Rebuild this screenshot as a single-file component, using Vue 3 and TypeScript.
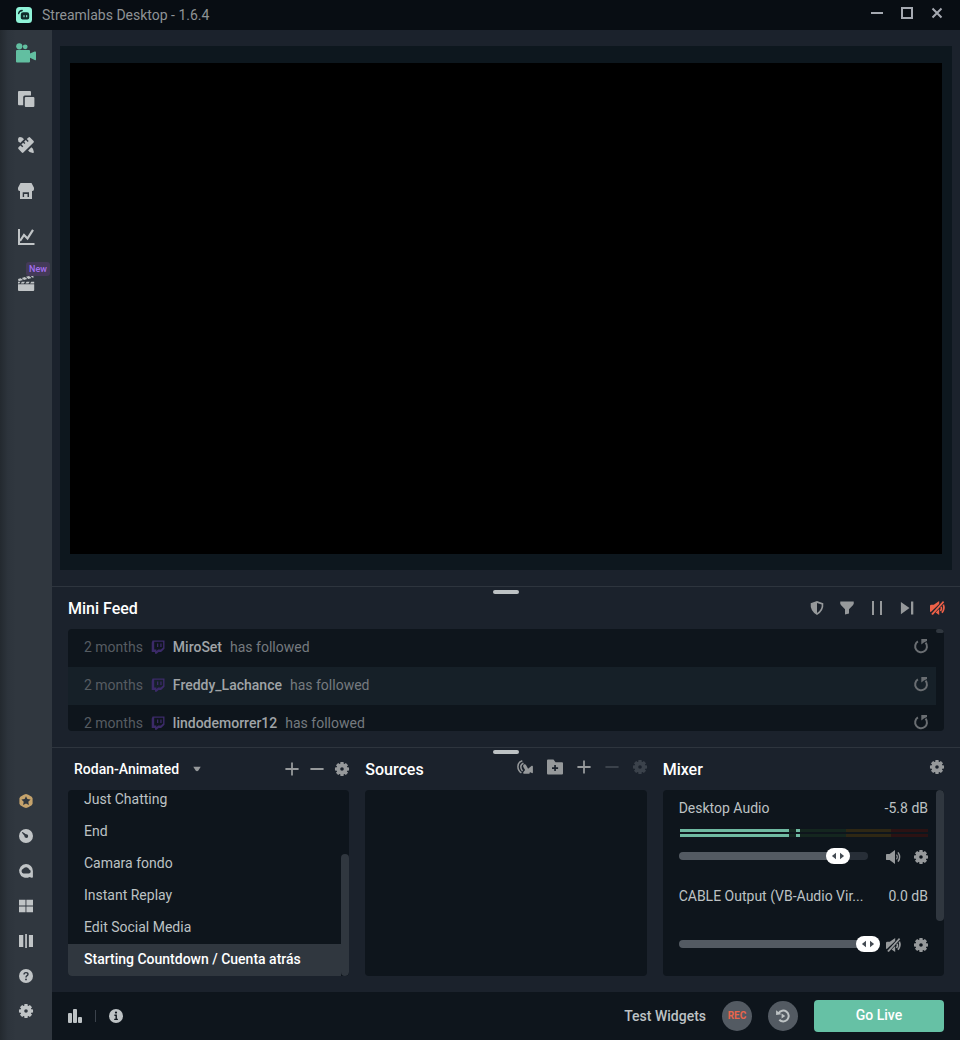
<script setup lang="ts">
import { h, ref, type FunctionalComponent } from 'vue'

function gearPath(c: number, outer: number, inner: number, hole: number): string {
  const points: string[] = []
  const step = Math.PI / 4
  for (let i = 0; i < 8; i++) {
    const a = i * step
    const corners: [number, number][] = [
      [inner, a - 0.32],
      [outer, a - 0.22],
      [outer, a + 0.22],
      [inner, a + 0.32],
    ]
    for (const [r, t] of corners) {
      points.push(`${(c + r * Math.cos(t)).toFixed(2)} ${(c + r * Math.sin(t)).toFixed(2)}`)
    }
  }
  return `M${points.join('L')}ZM${c - hole} ${c}a${hole} ${hole} 0 1 0 ${hole * 2} 0a${hole} ${hole} 0 1 0 ${-hole * 2} 0Z`
}

interface Glyph {
  w: number
  h: number
  body: string
}

const glyphs: Record<string, Glyph> = {
  logo: {
    w: 16,
    h: 16,
    body: '<rect width="16" height="16" rx="3.500" fill="#8ff3d8"/><path d="M2.600 6.600C3 4.600 4.300 3.600 6.200 3.500" fill="none" stroke="#0f2a2a" stroke-width="1.300" stroke-linecap="round"/><path d="M7.200 5.200h3.800a2.200 2.200 0 0 1 2.200 2.200v3.400a1.800 1.800 0 0 1-1.800 1.800H6.600a1.800 1.800 0 0 1-1.800-1.800V7.600a2.400 2.400 0 0 1 2.400-2.400z" fill="#0f2a2a"/><path d="M8 8.500v1.300M10.700 8.500v1.300" stroke="#8ff3d8" stroke-width="1.100" stroke-linecap="round"/>',
  },
  minimize: { w: 12, h: 12, body: '<path d="M0 6h12" stroke="currentColor" stroke-width="2"/>' },
  maximize: { w: 12, h: 12, body: '<path d="M1 1h10v10H1z" fill="none" stroke="currentColor" stroke-width="2"/>' },
  close: { w: 12, h: 12, body: '<path d="M1.500 1.500l9 9M10.500 1.500l-9 9" fill="none" stroke="currentColor" stroke-width="2"/>' },
  camera: {
    w: 20,
    h: 20,
    body: '<circle cx="3.300" cy="3.300" r="3.100"/><circle cx="9.200" cy="3.800" r="2.400"/><path d="M1 7h12a1 1 0 0 1 1 1v2.600L18.600 8.600q1.400-.5 1.400.8v7q0 1.200-1.300.6L14 14.800v3.700a1 1 0 0 1-1 1H1a1 1 0 0 1-1-1V8a1 1 0 0 1 1-1z"/>',
  },
  layers: {
    w: 16,
    h: 16,
    body: '<path d="M1 0h11a1 1 0 0 1 1 1v3.600H6.800A1.600 1.600 0 0 0 5.200 6.200v8H1a1 1 0 0 1-1-1V1a1 1 0 0 1 1-1z"/><rect x="6.800" y="6" width="9.600" height="10" rx="1"/>',
  },
  tools: {
    w: 16,
    h: 16,
    body: '<path d="M0 2.500Q0 .6 1.800.1L4.200.4 6 2.200 2.200 6 .4 4.200z"/><path d="M13.400 10.200l1.500 1.500 1 3.200q0 1.200-1.100 1.100l-3.200-.9-1.500-1.500z"/><path d="M.5 10.300L2.400 8.400l1.900 1.900 1-1-1.900-1.900 1.700-1.700 1.300 1.300 1-1-1.300-1.300 1.700-1.700 1.900 1.900 1-1-1.900-1.900L10.500.4q.8-.7 1.600 0l3.500 3.500q.7.8 0 1.600L5.400 15.600q-.8.700-1.600 0L.5 12q-.8-.8 0-1.700z"/>',
  },
  store: {
    w: 16,
    h: 16,
    body: '<path d="M2.500 0h11L16 4.700v1.600q0 1.600-1.500 1.600h-13Q0 7.900 0 6.300V4.700z"/><path fill-rule="evenodd" d="M2 7.500h12v8.500H2zM4.700 9.200v4.900h1.400v-3h3.400v3H11V9.200z"/>',
  },
  chart: {
    w: 16,
    h: 16,
    body: '<path d="M1 0v15h15.500" fill="none" stroke="currentColor" stroke-width="2"/><path d="M2 12L6 6l3.500 3.600L15 .9" fill="none" stroke="currentColor" stroke-width="2.200"/>',
  },
  clapper: {
    w: 16,
    h: 16,
    body: '<path d="M0 3.900L2.600 3.200l2.500 1.900L.6 6.300zM3.800 2.900l3-.8 2.500 2-3.300.9zM8 1.800l3-.8 2.500 2-3.200.9zM12.200.6L15 0l.7 2.500-1 .2z"/><path d="M0 6.800h2.500L1.300 8.600H0zM3.900 6.800H7L5.800 8.600H2.700zM8.600 6.800h3.100l-1.200 1.800H7.400zM13.300 6.800h2.900v1.800h-4.100zM0 9.200h16.200v5.800a1 1 0 0 1-1 1H1a1 1 0 0 1-1-1z"/>',
  },
  prime: {
    w: 14,
    h: 14,
    body: '<path fill-rule="evenodd" d="M7 0l2.300.7 3.400 2 .9 1.600v5.400l-.9 1.600-3.400 2L7 14l-2.300-.7-3.400-2-.9-1.600V4.300l.9-1.600 3.400-2zM7 2.200L5.600 5.100l-3.200.4 2.300 2.200-.6 3.200L7 9.400l2.900 1.500-.6-3.200 2.300-2.200-3.200-.4z"/>',
  },
  gauge: {
    w: 14,
    h: 14,
    body: '<path fill-rule="evenodd" d="M7 0a7 7 0 1 1 0 14A7 7 0 0 1 7 0zM2.800 3.600l2.600 3.200a1.900 1.900 0 1 0 1.500-1.600L3.600 2.900z"/>',
  },
  chat: {
    w: 14,
    h: 14,
    body: '<path fill-rule="evenodd" d="M7 0a6.900 6.900 0 0 1 6.900 6.900v5.900q0 1.300-1.200 1l-2.200-.9A6.900 6.900 0 1 1 7 0zM4.500 9.600h5.300a2.100 2.100 0 0 0 .4-4.100A3.300 3.300 0 0 0 4.200 4.800 2.500 2.500 0 0 0 4.500 9.600z"/>',
  },
  grid: { w: 14, h: 14, body: '<path d="M0 .7h6.500v5.900H0zM7.400.7H14v5.900H7.400zM0 7.400h6.500v5.900H0zM7.400 7.400H14v5.900H7.400z"/>' },
  bars: { w: 14, h: 14, body: '<path d="M0 1h4.300v12H0zM6.200 0h1.700v14H6.200zM9.900 1H14v12H9.900z"/>' },
  help: {
    w: 14,
    h: 14,
    body: '<circle cx="7" cy="7" r="7"/><path d="M5 5.500Q5 3.600 7 3.600t2 1.700Q9 6.200 7.800 6.900 7 7.400 7 8.400" fill="none" stroke="#2f363f" stroke-width="1.400"/><circle cx="7" cy="10.400" r=".9" fill="#2f363f"/>',
  },
  gear: { w: 14, h: 14, body: `<path fill-rule="evenodd" d="${gearPath(7, 7.2, 5.5, 1.8)}"/>` },
  shield: {
    w: 14,
    h: 14,
    body: '<path fill-rule="evenodd" d="M7 0l6.300 2.200q.8 7.600-6.300 11.800Q-.1 9.800.7 2.200zM7 2v9.900q5-3.300 4.700-8.400z"/>',
  },
  filter: { w: 14, h: 14, body: '<path d="M.3.600h13.400q.5 2.200-.6 3.500L9 8.200v4.200L5 13.600V8.200L.9 4.100Q-.2 2.800.3.600z"/>' },
  pause: { w: 14, h: 14, body: '<path d="M2 0h2v14H2zM10 0h2v14h-2z"/>' },
  next: { w: 14, h: 14, body: '<path d="M.9.900l8.600 6.100L.9 13.200zM11 .5h2.300v13H11z"/>' },
  muted: {
    w: 14,
    h: 14,
    body: '<path d="M0 5q0-1.200 1.300-1.200h2.500L9.200.1V3L.6 11.200 0 10.300z"/><path d="M13 .1L14.200 1.200 2.800 13.900 1.200 13z"/><path d="M9.200 8.100v5.800L5.600 11.500z"/><path d="M11.200 5.700q.9 2.300-.7 4.400M13.300 3.600q1.700 4.100-1.300 8.200" fill="none" stroke="currentColor" stroke-width="1.700"/>',
  },
  speaker: {
    w: 14,
    h: 14,
    body: '<path d="M0 4.800q0-.9.900-.9h2.700L9 .1v13.800L3.600 10.100H.9q-.9 0-.9-.9z"/><path d="M10.500 4.600q1.700 2.400 0 4.800" fill="none" stroke="currentColor" stroke-width="1.100"/><path d="M12 2.300q3.200 4.700 0 9.400" fill="none" stroke="currentColor" stroke-width="1.500"/>',
  },
  twitch: {
    w: 14,
    h: 14,
    body: '<path fill-rule="evenodd" d="M1.500.5h12v8.200l-3.400 3.200H7.600l-2 1.900H4v-1.900H.7V2.700zM3.200 1.700v7.900h2.200v1.700L7 9.600h2.800l2.300-2.200V1.700zM6 3.600h1.300v3.300H6zM9.300 3.600h1.300v3.300H9.300z"/>',
  },
  replay: {
    w: 14,
    h: 14,
    body: '<path d="M3.900 2.400A5.900 5.900 0 1 0 11.600 3.600" fill="none" stroke="currentColor" stroke-width="2"/><path d="M7.300-.1h5.700V2L9.900 3.500 7.300 5.400z"/>',
  },
  plus: { w: 14, h: 14, body: '<path d="M7 .4v13.200M.4 7h13.200" fill="none" stroke="currentColor" stroke-width="1.800"/>' },
  minus: { w: 14, h: 14, body: '<path d="M.4 7h13.200" fill="none" stroke="currentColor" stroke-width="2"/>' },
  caret: { w: 8, h: 8, body: '<path d="M.3 1.700h7.400L5.400 5.400Q4 7 2.600 5.400z"/>' },
  broadcast: {
    w: 16,
    h: 14,
    body: '<path d="M5.300.7Q.9 2.200.9 6.500q0 4.200 3.500 6.400M6.500 3.300Q3.800 4.300 3.800 6.800q0 2.400 1.700 4.200" fill="none" stroke="currentColor" stroke-width="1.500"/><path d="M7 4.300q1.500-.4 2.300 1.200l1.800 3.200 3.600-2.900q1.100-.4 1.200.6v6.200q-.2.900-1.100.5l-2-1v.8q-.1.800-.9.800H6.700Q5.600 13.300 6.500 12l1.600-2-1.900-3.200Q5.800 5 7 4.300z"/>',
  },
  folder: {
    w: 16,
    h: 16,
    body: '<path fill-rule="evenodd" d="M1 .5h5.500l2 2.700h6.500a1 1 0 0 1 1 1v10.300a1 1 0 0 1-1 1H1a1 1 0 0 1-1-1V1.500a1 1 0 0 1 1-1zM7.200 6v2.200H5v1.700h2.200v2.200h1.700V9.900h2.200V8.200H8.900V6z"/>',
  },
  stats: { w: 14, h: 14, body: '<rect y="4" width="4" height="10" rx="1"/><rect x="5" width="4" height="14" rx="1"/><rect x="10" y="8" width="4" height="6" rx="1"/>' },
  info: {
    w: 14,
    h: 14,
    body: '<circle cx="7" cy="7" r="7"/><circle cx="7" cy="3.600" r="1.100" fill="#0e151c"/><path d="M5.400 6.200H7.200v4.200M5.200 10.400h3.700" fill="none" stroke="#0e151c" stroke-width="1.400"/>',
  },
  history: {
    w: 14,
    h: 14,
    body: '<path d="M2.600 4.300A5.400 5.400 0 1 1 3.300 10.700" fill="none" stroke="currentColor" stroke-width="2"/><path d="M.1 1.200l1.600 1.200 3.700 2.900-5.300.8zM5.600 4.500l3.700 2.500-3.700 2.500z"/>',
  },
  arrows: { w: 14, h: 8, body: '<path d="M5 .8v6.400L.9 4zM9 .8v6.400L13.100 4z"/>' },
}

const Icon: FunctionalComponent<{ name: string }> = (props) => {
  const g = glyphs[props.name]
  return h('svg', {
    class: 'icon',
    width: g.w,
    height: g.h,
    viewBox: `0 0 ${g.w} ${g.h}`,
    fill: 'currentColor',
    'aria-hidden': 'true',
    innerHTML: g.body,
  })
}
Icon.props = ['name']

const windowActions = [
  { icon: 'minimize', label: 'Minimize' },
  { icon: 'maximize', label: 'Maximize' },
  { icon: 'close', label: 'Close' },
]

const mainNav = [
  { icon: 'camera', label: 'Editor', active: true },
  { icon: 'layers', label: 'Layout Editor' },
  { icon: 'tools', label: 'Themes' },
  { icon: 'store', label: 'App Store' },
  { icon: 'chart', label: 'Dashboard' },
  { icon: 'clapper', label: 'Highlighter', badge: 'New' },
]

const utilityNav = [
  { icon: 'prime', label: 'Prime', gold: true },
  { icon: 'gauge', label: 'Dashboard home' },
  { icon: 'chat', label: 'Cloudbot' },
  { icon: 'grid', label: 'Layout' },
  { icon: 'bars', label: 'Studio panels' },
  { icon: 'help', label: 'Help' },
  { icon: 'gear', label: 'Settings' },
]

const feedActions = [
  { icon: 'shield', label: 'Safe mode' },
  { icon: 'filter', label: 'Filter' },
  { icon: 'pause', label: 'Pause queue' },
  { icon: 'next', label: 'Skip alert' },
  { icon: 'muted', label: 'Mute alerts', alert: true },
]

const events = [
  { age: '2 months', user: 'MiroSet', action: 'has followed' },
  { age: '2 months', user: 'Freddy_Lachance', action: 'has followed' },
  { age: '2 months', user: 'lindodemorrer12', action: 'has followed' },
]

const sceneActions = [
  { icon: 'plus', label: 'Add scene' },
  { icon: 'minus', label: 'Remove scene' },
  { icon: 'gear', label: 'Scene transitions' },
]

const sourceActions = [
  { icon: 'broadcast', label: 'Selective recording' },
  { icon: 'folder', label: 'Add group' },
  { icon: 'plus', label: 'Add source' },
  { icon: 'minus', label: 'Remove source', disabled: true },
  { icon: 'gear', label: 'Source properties', disabled: true },
]

const scenes = ['Just Chatting', 'End', 'Camara fondo', 'Instant Replay', 'Edit Social Media', 'Starting Countdown / Cuenta atrás']
const activeScene = ref('Starting Countdown / Cuenta atrás')
const collection = ref('Rodan-Animated')

const channels = ref([
  { name: 'Desktop Audio', level: '-5.8 dB', volume: 84, muted: false },
  { name: 'CABLE Output (VB-Audio Vir...', level: '0.0 dB', volume: 100, muted: true },
])
</script>

<template>
  <div class="app">
    <header class="titlebar">
      <Icon name="logo" />
      <span class="app-name">Streamlabs Desktop - 1.6.4</span>
      <div class="window-actions">
        <button v-for="a in windowActions" :key="a.icon" type="button" :aria-label="a.label"><Icon :name="a.icon" /></button>
      </div>
    </header>

    <nav class="sidebar" aria-label="Main">
      <div class="nav-main">
        <button v-for="n in mainNav" :key="n.icon" type="button" :aria-label="n.label" :class="{ active: n.active }">
          <Icon :name="n.icon" />
          <span v-if="n.badge" class="badge">{{ n.badge }}</span>
        </button>
      </div>
      <div class="nav-utility">
        <button v-for="n in utilityNav" :key="n.icon" type="button" :aria-label="n.label" :class="{ gold: n.gold }">
          <Icon :name="n.icon" />
        </button>
      </div>
    </nav>

    <main class="studio">
      <section class="preview" aria-label="Preview">
        <div class="stage"><div class="canvas"></div></div>
      </section>

      <section class="dock">
        <span class="handle"></span>
        <div class="panel-head">
          <h2>Mini Feed</h2>
          <div class="tools">
            <button v-for="a in feedActions" :key="a.icon" type="button" :aria-label="a.label" :class="{ alert: a.alert }">
              <Icon :name="a.icon" />
            </button>
          </div>
        </div>
        <div class="box feed">
          <ul>
            <li v-for="e in events" :key="e.user">
              <span class="age">{{ e.age }}</span>
              <Icon name="twitch" class="twitch" />
              <strong>{{ e.user }}</strong>
              <span class="action">{{ e.action }}</span>
              <button type="button" :aria-label="`Repeat alert for ${e.user}`"><Icon name="replay" /></button>
            </li>
          </ul>
          <div class="scroll"><i class="thumb feed-thumb"></i></div>
        </div>
      </section>

      <section class="dock columns">
        <span class="handle"></span>
        <div class="column">
          <div class="panel-head">
            <div class="collection">
              <select v-model="collection" aria-label="Scene collection">
                <option>Rodan-Animated</option>
              </select>
              <Icon name="caret" class="caret" />
            </div>
            <div class="tools scene-tools">
              <button v-for="a in sceneActions" :key="a.icon" type="button" :aria-label="a.label"><Icon :name="a.icon" /></button>
            </div>
          </div>
          <div class="box scenes">
            <ul>
              <li v-for="s in scenes" :key="s">
                <button type="button" :class="{ selected: s === activeScene }" @click="activeScene = s">{{ s }}</button>
              </li>
            </ul>
            <div class="scroll scroll-end"><i class="thumb scene-thumb"></i></div>
          </div>
        </div>

        <div class="column">
          <div class="panel-head">
            <h2>Sources</h2>
            <div class="tools raised source-tools">
              <button v-for="a in sourceActions" :key="a.icon" type="button" :aria-label="a.label" :disabled="a.disabled">
                <Icon :name="a.icon" />
              </button>
            </div>
          </div>
          <div class="box"></div>
        </div>

        <div class="column">
          <div class="panel-head">
            <h2>Mixer</h2>
            <div class="tools raised">
              <button type="button" aria-label="Advanced audio settings"><Icon name="gear" /></button>
            </div>
          </div>
          <div class="box mixer">
            <div class="channels">
              <div v-for="(c, i) in channels" :key="c.name" class="channel">
                <div class="channel-head">
                  <label :for="`volume-${i}`">{{ c.name }}</label>
                  <span>{{ c.level }}</span>
                </div>
                <div class="meters">
                  <template v-if="!c.muted">
                    <div v-for="n in 2" :key="n" class="meter"><i class="level"></i><i class="peak"></i></div>
                  </template>
                </div>
                <div class="controls">
                  <div class="slider" :style="{ '--value': c.volume + '%' }">
                    <input :id="`volume-${i}`" v-model.number="c.volume" type="range" min="0" max="100" />
                    <Icon name="arrows" class="grip" />
                  </div>
                  <button type="button" :aria-label="`Mute ${c.name}`"><Icon :name="c.muted ? 'muted' : 'speaker'" /></button>
                  <button type="button" :aria-label="`Settings for ${c.name}`"><Icon name="gear" /></button>
                </div>
              </div>
            </div>
            <div class="scroll"><i class="thumb mixer-thumb"></i></div>
          </div>
        </div>
      </section>

      <footer class="statusbar">
        <button type="button" aria-label="Performance"><Icon name="stats" /></button>
        <span class="divider"></span>
        <button type="button" aria-label="Information"><Icon name="info" /></button>
        <div class="stream-actions">
          <button type="button" class="widgets">Test Widgets</button>
          <button type="button" class="round rec">REC</button>
          <button type="button" class="round" aria-label="Replay buffer"><Icon name="history" /></button>
          <button type="button" class="go-live">Go Live</button>
        </div>
      </footer>
    </main>
  </div>
</template>

<style>
body {
  margin: 0;
  background: #1b222c;
}
</style>

<style scoped>
.app {
  display: grid;
  grid-template-columns: 52px minmax(0, 1fr);
  grid-template-rows: 30px minmax(0, 1fr);
  min-height: 100vh;
  background: #1b222c;
  color: #bdc2c4;
  font: 14px/20px Roboto, "Liberation Sans", sans-serif;
}
.app * {
  box-sizing: border-box;
}
button {
  display: flex;
  align-items: center;
  justify-content: center;
  padding: 0;
  border: 0;
  background: none;
  color: inherit;
  font: inherit;
  cursor: pointer;
}
ul {
  margin: 0;
  padding: 0;
  list-style: none;
}
h2 {
  margin: 0;
  padding-top: 2px;
  color: #fff;
  font-size: 16px;
  font-weight: 500;
}
.icon {
  display: block;
  flex: none;
  overflow: visible;
}
.titlebar {
  grid-column: 1 / -1;
  display: flex;
  align-items: center;
  gap: 10px;
  padding: 0 17px 0 16px;
  background: #080d13;
  color: #8f9396;
}
.window-actions {
  display: flex;
  gap: 18px;
  margin-left: auto;
  padding-bottom: 4px;
  color: #a5a9b1;
}
.sidebar {
  display: flex;
  flex-direction: column;
  justify-content: space-between;
  padding-bottom: 12px;
  background: linear-gradient(90deg, #23292f, #2d343c 8px, #30373f 16px);
  color: #c0c4c6;
}
.sidebar button {
  position: relative;
  width: 100%;
}
.nav-main button {
  height: 46px;
}
.nav-utility button {
  height: 35px;
}
.sidebar .active {
  color: #62bfa1;
}
.sidebar .gold {
  color: #c5a36c;
}
.badge {
  position: absolute;
  top: 2px;
  right: 2px;
  padding: 0 3px;
  border-radius: 3px;
  background: #443a58;
  color: #a46ff0;
  font-size: 9px;
  font-weight: 500;
  line-height: 14px;
}
.studio {
  display: flex;
  flex-direction: column;
  min-width: 0;
}
.preview {
  display: flex;
  flex: 1;
  padding: 16px 8px;
}
.stage {
  display: flex;
  flex: 1;
  padding: 17px 10px 16px;
  background: #0d171e;
}
.canvas {
  flex: 1;
  background: #000;
}
.dock {
  position: relative;
  padding: 0 16px 16px;
  border-top: 1px solid #2e353e;
}
.handle {
  position: absolute;
  top: 3px;
  left: 50%;
  width: 26px;
  height: 4px;
  margin-left: -13px;
  border-radius: 2px;
  background: #bdc2c4;
}
.columns .handle {
  top: 2px;
}
.panel-head {
  display: flex;
  align-items: center;
  justify-content: space-between;
  height: 42px;
}
.tools {
  display: flex;
  gap: 16px;
  color: #96999b;
}
.tools button {
  min-width: 14px;
  height: 16px;
}
.tools.raised {
  padding-bottom: 4px;
}
.scene-tools {
  gap: 11px;
}
.source-tools {
  gap: 14px;
}
.tools button:disabled {
  color: #3b424b;
}
.tools .alert {
  color: #ee6148;
}
.box {
  display: flex;
  overflow: hidden;
  border-radius: 4px;
  background: #0e151c;
}
.box > :first-child {
  flex: 1;
  min-width: 0;
}
.scroll {
  display: flex;
  width: 8px;
}
.scroll-end {
  align-items: flex-end;
}
.thumb {
  width: 8px;
  border-radius: 4px;
  background: #30373f;
}
.feed-thumb {
  height: 4px;
}
.scene-thumb {
  height: 122px;
}
.mixer-thumb {
  height: 131px;
}
.feed {
  height: 102px;
}
.feed li {
  display: flex;
  align-items: center;
  gap: 8px;
  height: 38px;
  padding: 0 8px 2px 16px;
  color: #757a7f;
}
.feed li:nth-child(even) {
  background: #162028;
}
.feed .age {
  color: #565c62;
}
.feed strong {
  color: #a0a4a7;
  font-weight: 500;
}
.feed button {
  margin-left: auto;
  padding-bottom: 2px;
  color: #6a6e72;
}
.twitch {
  color: #3b2a68;
}
.columns {
  display: grid;
  grid-template-columns: repeat(3, minmax(0, 1fr));
  gap: 16px;
}
.column .box {
  height: 186px;
}
.collection {
  position: relative;
  display: flex;
  align-items: center;
}
.collection select {
  appearance: none;
  padding: 0 30px 0 6px;
  border: 0;
  background: none;
  color: #fff;
  font: inherit;
  font-weight: 500;
}
.caret {
  position: absolute;
  right: 9px;
  color: #96999b;
  pointer-events: none;
}
.scenes ul {
  display: flex;
  flex-direction: column;
  justify-content: flex-end;
}
.scenes li button {
  justify-content: flex-start;
  width: 100%;
  height: 32px;
  padding: 0 16px 2px;
}
.scenes li .selected {
  background: #30373f;
  color: #fff;
  font-weight: 500;
}
.channels {
  padding: 0 8px 0 16px;
}
.channel {
  height: 88px;
  padding-top: 8px;
}
.channel-head {
  display: flex;
  justify-content: space-between;
}
.meters {
  display: grid;
  gap: 2px;
  height: 8px;
  margin: 11px 0 12px 1px;
}
.meter {
  display: flex;
  gap: 7px;
  height: 3px;
  background: linear-gradient(90deg, #14261f 67%, #2e2714 67% 85%, #2b1213 85%);
}
.level {
  width: 44%;
  background: #6fb9a1;
}
.peak {
  width: 4px;
  background: #6fb9a1;
}
.controls {
  display: flex;
  align-items: center;
  gap: 14px;
  height: 16px;
  color: #96999b;
}
.controls button {
  width: 14px;
}
.slider {
  position: relative;
  display: flex;
  flex: 1;
  align-items: center;
  height: 8px;
  margin: 0 4px 2px 0;
  border-radius: 4px;
  background: linear-gradient(90deg, #535a62 var(--value), #272e37 var(--value));
}
.slider input {
  appearance: none;
  flex: 1;
  height: 16px;
  min-width: 0;
  margin: 0 -12px;
  background: none;
}
.slider input::-webkit-slider-thumb {
  appearance: none;
  width: 24px;
  height: 16px;
  border-radius: 8px;
  background: #fff;
}
.grip {
  position: absolute;
  left: var(--value);
  margin-left: -7px;
  color: #444b53;
  pointer-events: none;
}
.statusbar {
  display: flex;
  align-items: center;
  gap: 13px;
  height: 48px;
  padding: 0 16px;
  background: #0e151c;
}
.divider {
  width: 1px;
  height: 12px;
  background: #3b424b;
}
.stream-actions {
  display: flex;
  align-items: center;
  gap: 16px;
  margin-left: auto;
  font-weight: 500;
}
.round {
  width: 30px;
  height: 30px;
  border-radius: 50%;
  background: #535a62;
}
.rec {
  color: #e8654c;
  font-size: 10px;
  font-weight: 700;
}
.go-live {
  width: 130px;
  height: 32px;
  padding-bottom: 2px;
  border-radius: 4px;
  background: #66c1a5;
  color: #fff;
}
</style>
